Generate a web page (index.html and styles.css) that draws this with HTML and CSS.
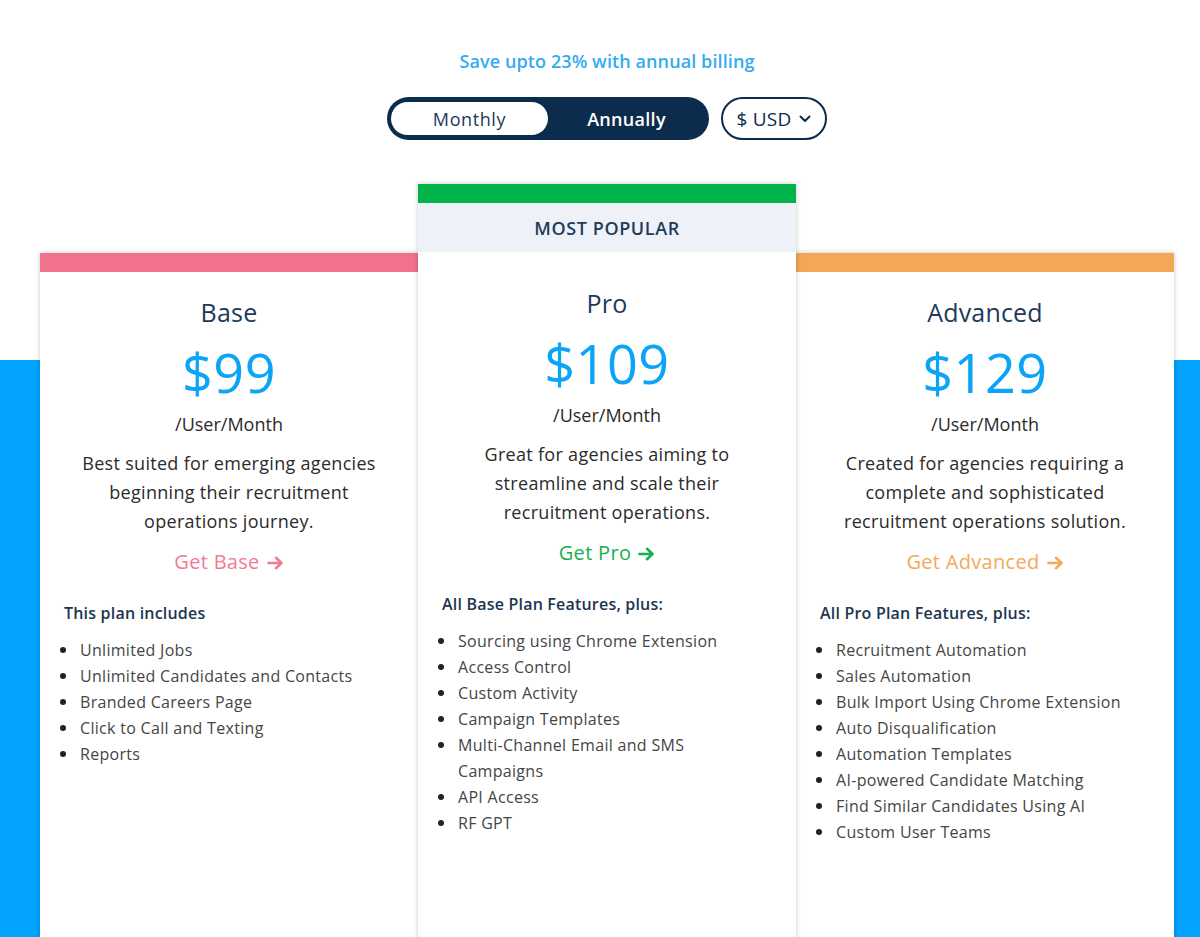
FILE: index.html
```html
<!DOCTYPE html>
<html lang="en">
<head>
<meta charset="utf-8">
<title>Pricing</title>
<link rel="stylesheet" href="styles.css">
</head>
<body>
<div class="page">
  <header class="billing">
    <p class="save">Save upto 23% with annual billing</p>
    <div class="controls">
      <div class="toggle">
        <span class="opt opt-active">Monthly</span>
        <span class="opt">Annually</span>
      </div>
      <div class="currency">
        <span>$ USD</span>
        <svg class="chev" width="12" height="8" viewBox="0 0 12 8"><path d="M1.5 1.5 L6 6 L10.5 1.5" fill="none" stroke="#0c2b4b" stroke-width="2" stroke-linecap="round" stroke-linejoin="round"/></svg>
      </div>
    </div>
  </header>

  <section class="plans">
    <div class="cards">
      <article class="card card-base">
        <div class="bar"></div>
        <div class="body">
          <h2 class="name">Base</h2>
          <div class="price">$99</div>
          <div class="per">/User/Month</div>
          <p class="desc">Best suited for emerging agencies<br>beginning their recruitment<br>operations journey.</p>
          <a class="cta">Get Base <svg class="arrow" width="17" height="14" viewBox="0 0 17 14"><path d="M1.5 7 H14.5 M9 1.8 L14.5 7 L9 12.2" fill="none" stroke="currentColor" stroke-width="2.6" stroke-linecap="round" stroke-linejoin="round"/></svg></a>
          <h3 class="incl">This plan includes</h3>
          <ul class="feats">
            <li>Unlimited Jobs</li>
            <li>Unlimited Candidates and Contacts</li>
            <li>Branded Careers Page</li>
            <li>Click to Call and Texting</li>
            <li>Reports</li>
          </ul>
        </div>
      </article>

      <article class="card card-pro">
        <div class="bar"></div>
        <div class="popular">MOST POPULAR</div>
        <div class="body">
          <h2 class="name">Pro</h2>
          <div class="price">$109</div>
          <div class="per">/User/Month</div>
          <p class="desc">Great for agencies aiming to<br>streamline and scale their<br>recruitment operations.</p>
          <a class="cta">Get Pro <svg class="arrow" width="17" height="14" viewBox="0 0 17 14"><path d="M1.5 7 H14.5 M9 1.8 L14.5 7 L9 12.2" fill="none" stroke="currentColor" stroke-width="2.6" stroke-linecap="round" stroke-linejoin="round"/></svg></a>
          <h3 class="incl">All Base Plan Features, plus:</h3>
          <ul class="feats">
            <li>Sourcing using Chrome Extension</li>
            <li>Access Control</li>
            <li>Custom Activity</li>
            <li>Campaign Templates</li>
            <li>Multi-Channel Email and SMS<br>Campaigns</li>
            <li>API Access</li>
            <li>RF GPT</li>
          </ul>
        </div>
      </article>

      <article class="card card-adv">
        <div class="bar"></div>
        <div class="body">
          <h2 class="name">Advanced</h2>
          <div class="price">$129</div>
          <div class="per">/User/Month</div>
          <p class="desc">Created for agencies requiring a<br>complete and sophisticated<br>recruitment operations solution.</p>
          <a class="cta">Get Advanced <svg class="arrow" width="17" height="14" viewBox="0 0 17 14"><path d="M1.5 7 H14.5 M9 1.8 L14.5 7 L9 12.2" fill="none" stroke="currentColor" stroke-width="2.6" stroke-linecap="round" stroke-linejoin="round"/></svg></a>
          <h3 class="incl">All Pro Plan Features, plus:</h3>
          <ul class="feats">
            <li>Recruitment Automation</li>
            <li>Sales Automation</li>
            <li>Bulk Import Using Chrome Extension</li>
            <li>Auto Disqualification</li>
            <li>Automation Templates</li>
            <li>AI-powered Candidate Matching</li>
            <li>Find Similar Candidates Using AI</li>
            <li>Custom User Teams</li>
          </ul>
        </div>
      </article>
    </div>
  </section>
</div>
</body>
</html>
```

FILE: styles.css
```css
* { box-sizing: border-box; }

html, body {
  margin: 0;
  padding: 0;
  background: #ffffff;
  overflow: hidden;
}

body {
  font-family: "Open Sans", "Noto Sans", Arial, sans-serif;
  color: #333;
}

.page {
  width: 1200px;
  height: 937px;
  overflow: hidden;
}

.billing {
  display: flex;
  flex-direction: column;
  align-items: center;
  padding-left: 14px;
  padding-top: 48px;
}

.save {
  margin: 0;
  font-size: 18px;
  line-height: 26px;
  color: #34abf1;
  font-weight: 600;
  letter-spacing: 0.1px;
}

.controls {
  display: flex;
  align-items: center;
  gap: 12px;
  margin-top: 23px;
}

.toggle {
  display: flex;
  align-items: center;
  width: 322px;
  height: 43px;
  padding: 5px 4px;
  background: #0c2c4d;
  border-radius: 22px;
}

.opt {
  flex: 1;
  height: 33px;
  display: flex;
  align-items: center;
  justify-content: center;
  font-size: 18px;
  font-weight: 600;
  letter-spacing: 0.3px;
  color: #ffffff;
  border-radius: 17px;
}

.opt-active {
  flex: 0 0 157px;
  background: #ffffff;
  color: #1c3a5a;
  font-weight: 500;
  letter-spacing: 0.6px;
}

.currency {
  width: 106px;
  height: 43px;
  border: 2px solid #0c2c4d;
  border-radius: 22px;
  display: flex;
  align-items: center;
  justify-content: center;
  gap: 8px;
  font-size: 19px;
  font-weight: 500;
  letter-spacing: 0.2px;
  color: #0c2c4d;
}

.plans {
  margin-top: 44px;
  background: linear-gradient(to bottom, #ffffff 176px, #02a4fe 176px);
  height: 760px;
  padding-left: 40px;
}

.cards {
  display: flex;
  align-items: flex-start;
}

.card {
  width: 378px;
  background: #ffffff;
  box-shadow: 0 0 5px rgba(0, 0, 0, 0.22);
  min-height: 800px;
  display: flex;
  flex-direction: column;
}

.card-base, .card-adv { margin-top: 69px; }
.card-pro { position: relative; z-index: 1; }

.bar { height: 19px; }
.card-base .bar { background: #f0728b; }
.card-pro .bar { background: #00b44b; }
.card-adv .bar { background: #f3a757; }

.popular {
  height: 49px;
  background: #eef2f8;
  display: flex;
  align-items: center;
  justify-content: center;
  font-size: 18px;
  font-weight: 600;
  color: #1f3b59;
  letter-spacing: 0.6px;
}

.body {
  display: flex;
  flex-direction: column;
  align-items: center;
  padding: 25px 24px 0;
}

.card-pro .body { padding-top: 36px; }

.name {
  margin: 0;
  font-size: 25px;
  line-height: 31px;
  font-weight: 500;
  color: #1d3a58;
  letter-spacing: 0.2px;
}

.price {
  margin-top: 13px;
  font-size: 54px;
  line-height: 62px;
  font-weight: 500;
  color: #0ba4f6;
  letter-spacing: 0.5px;
}

.per {
  margin-top: 7px;
  font-size: 18px;
  line-height: 29px;
  color: #2b2b2b;
}

.desc {
  margin: 10px 0 0;
  text-align: center;
  font-size: 18px;
  line-height: 29px;
  letter-spacing: 0.3px;
  color: #2b2b2b;
}

.cta {
  margin-top: 11px;
  display: flex;
  align-items: center;
  gap: 7px;
  font-size: 20px;
  line-height: 30px;
  letter-spacing: 0.3px;
}

.card-base .cta { color: #f27a94; }
.card-pro .cta { color: #17b04e; }
.card-adv .cta { color: #f4a85c; }

.arrow { margin-top: 2px; }

.incl {
  align-self: stretch;
  margin: 24px 0 0;
  font-size: 16px;
  line-height: 24px;
  font-weight: 600;
  letter-spacing: 0.2px;
  color: #1d3550;
}

.feats {
  align-self: stretch;
  list-style: none;
  margin: 12px 0 0 -4px;
  padding: 0;
}

.feats li {
  display: flex;
  align-items: flex-start;
  gap: 14px;
  font-size: 16px;
  line-height: 26px;
  letter-spacing: 0.3px;
  color: #454545;
}

.feats li::before {
  content: "";
  flex: 0 0 6px;
  width: 6px;
  height: 6px;
  margin-top: 10px;
  border-radius: 50%;
  background: #222;
}
```
